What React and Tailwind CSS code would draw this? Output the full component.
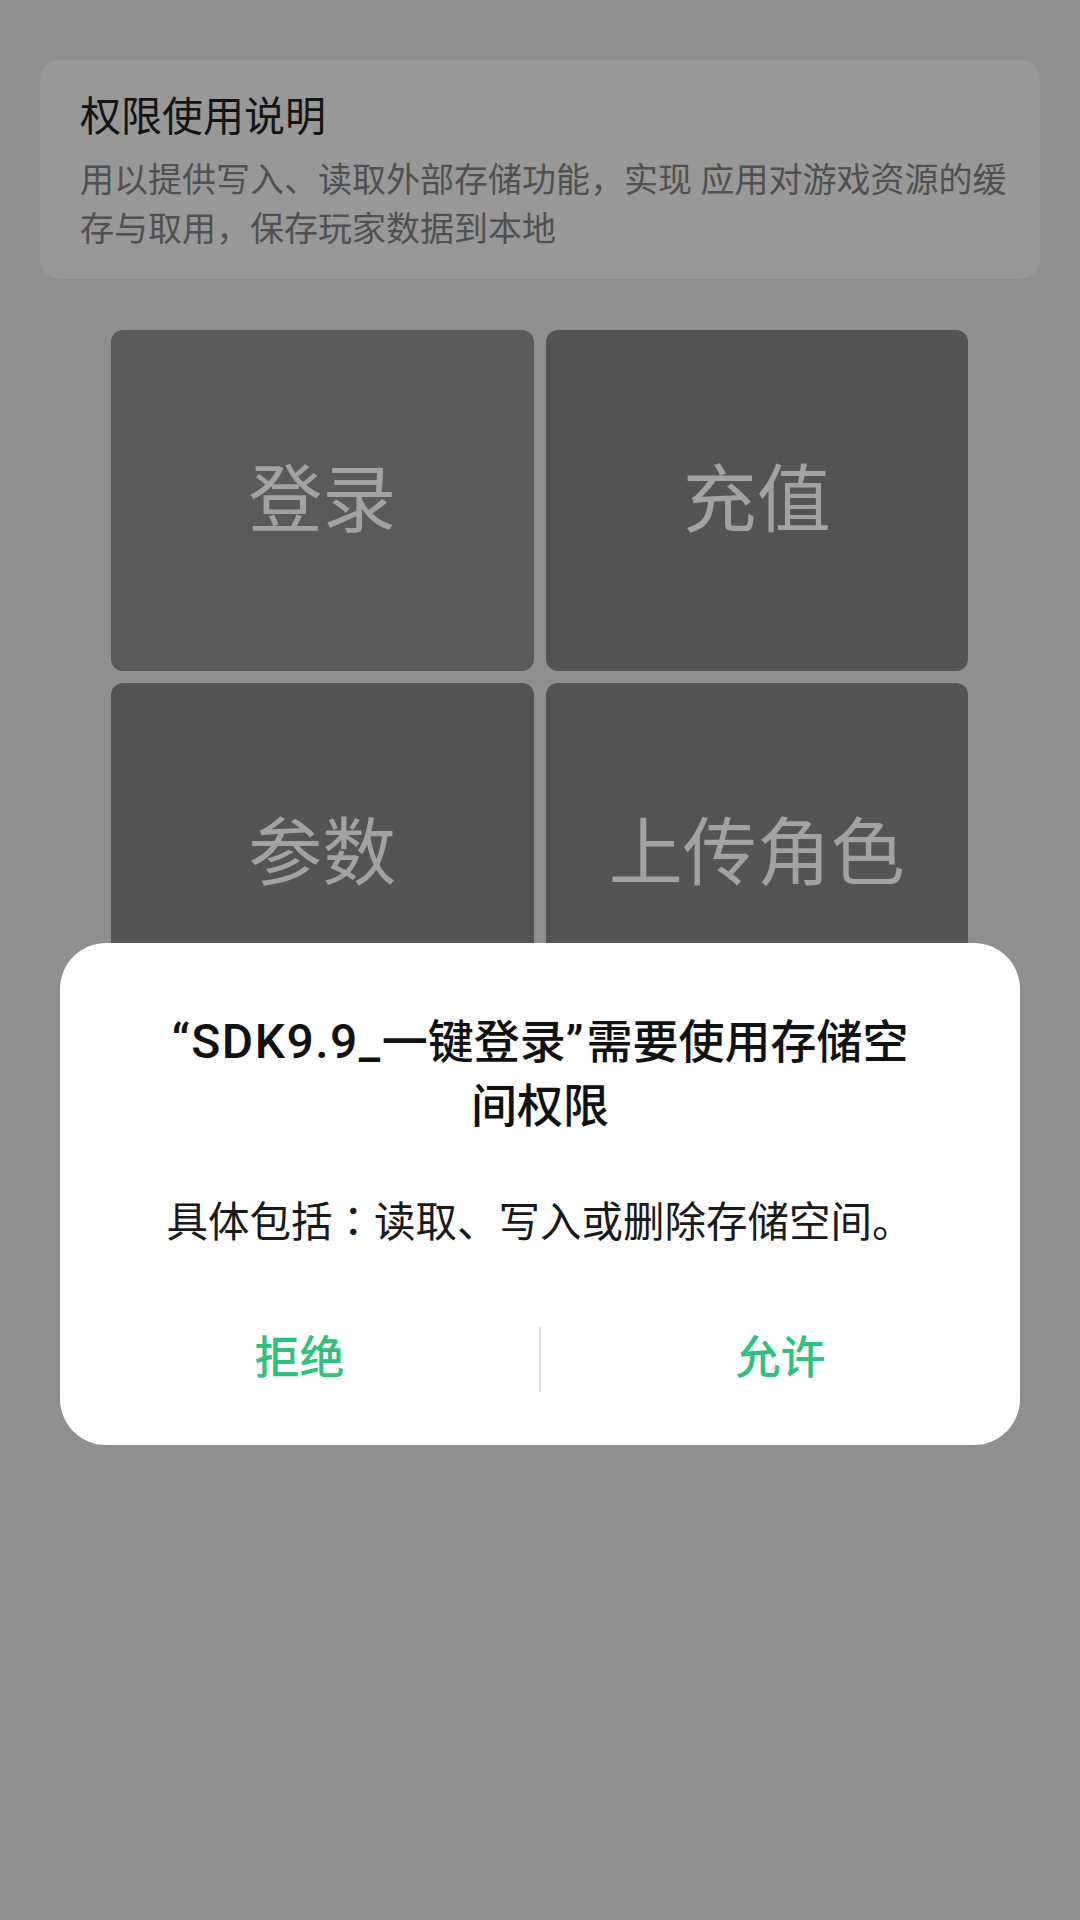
import React from 'react';

const CJK = 'font-["Roboto","Noto_Sans_CJK_SC",sans-serif]';

const TILES = [
  { label: '登录', bg: 'bg-[#5a5a5a]' },
  { label: '充值', bg: 'bg-[#545454]' },
  { label: '参数', bg: 'bg-[#545454]' },
  { label: '上传角色', bg: 'bg-[#545454]' },
];

const PermissionDialog = () => (
  <div className={`absolute left-[60px] top-[943px] w-[960px] rounded-[46px] bg-white pt-[67px] pb-[21px] ${CJK}`}>
    <p className="h-[128px] text-center text-[46px] leading-[64px] font-medium text-[#111111]">
      <span className="text-[48px] tracking-[1.5px]">“SDK9.9_</span>一键登录<span className="tracking-[3px]">”</span>需要使用存储空<br />间权限
    </p>
    <p className="mt-[53px] h-[56px] text-center text-[41.5px] leading-[56px] text-[#1a1a1a]">
      具体包括<span className='font-["Noto_Sans_CJK_TC",sans-serif]'>：</span>读取、写入或删除存储空间。
    </p>
    <div className="mt-[47px] flex h-[130px] items-center">
      <button className="flex-1 text-center text-[45px] font-medium text-[#2fc27e]">拒绝</button>
      <div className="h-[65px] w-[2px] bg-[#e3e3e3]"></div>
      <button className="flex-1 text-center text-[45px] font-medium text-[#2fc27e]">允许</button>
    </div>
  </div>
);

export default function App() {
  return (
    <div className={`relative min-h-[1920px] w-[1080px] overflow-hidden bg-[#8f8f8f] ${CJK}`}>
      {/* 权限说明卡片 */}
      <div className="px-10 pt-[60px]">
        <div className="rounded-[20px] bg-[#989898] pl-10 pr-[28px] pt-[33px] pb-[25px]">
          <p className="text-[41px] leading-[48px] text-[#141414]">权限使用说明</p>
          <p className="mt-[15px] text-[34px] leading-[49px] text-[#505050]">
            用以提供写入、读取外部存储功能，实现 应用对游戏资源的缓<br />存与取用，保存玩家数据到本地
          </p>
        </div>
      </div>

      {/* 功能按钮 */}
      <div className="mt-[51px] grid grid-cols-2 gap-3 pl-[111px] pr-[112px]">
        {TILES.map((t) => (
          <div
            key={t.label}
            className={`flex h-[341px] items-center justify-center rounded-[12px] ${t.bg} text-[74px] text-[#a2a2a2]`}
          >
            {t.label}
          </div>
        ))}
      </div>

      <PermissionDialog />
    </div>
  );
}
